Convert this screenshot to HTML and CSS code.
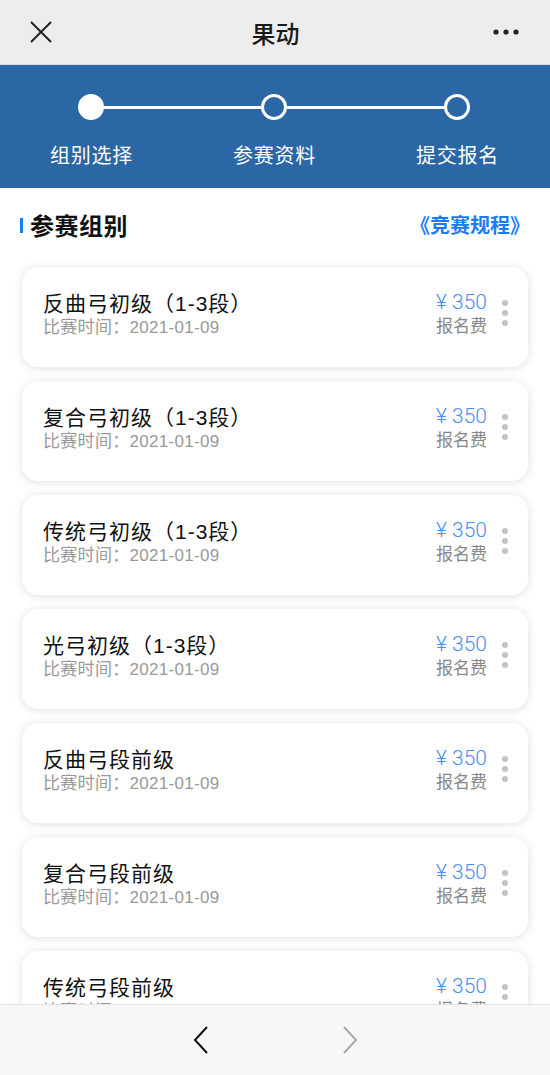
FILE: index.html
```html
<!DOCTYPE html>
<html lang="zh">
<head>
<meta charset="utf-8">
<title>果动</title>
<link rel="stylesheet" href="styles.css">
</head>
<body>
<div class="page">
  <header class="topbar">
    <svg class="close" width="24" height="24" viewBox="0 0 24 24"><path d="M2 2L22 22M22 2L2 22" stroke="#222" stroke-width="2" fill="none"/></svg>
    <div class="title">果动</div>
    <svg class="more" width="28" height="8" viewBox="0 0 28 8"><circle cx="4" cy="4" r="2.6" fill="#222"/><circle cx="14" cy="4" r="2.6" fill="#222"/><circle cx="24" cy="4" r="2.6" fill="#222"/></svg>
  </header>

  <section class="steps">
    <div class="track">
      <span class="dot filled"></span>
      <span class="line"></span>
      <span class="dot"></span>
      <span class="line"></span>
      <span class="dot"></span>
    </div>
    <div class="labels">
      <span>组别选择</span>
      <span>参赛资料</span>
      <span>提交报名</span>
    </div>
  </section>

  <div class="section-head">
    <h2><span class="bar"></span>参赛组别</h2>
    <a class="rules">《竞赛规程》</a>
  </div>

  <div class="cards">
    <div class="card"><div class="info"><div class="name">反曲弓初级（1-3段）</div><div class="date">比赛时间：2021-01-09</div></div><div class="fee"><div class="price">¥ 350</div><div class="label">报名费</div></div><div class="kebab"><i></i><i></i><i></i></div></div>
    <div class="card"><div class="info"><div class="name">复合弓初级（1-3段）</div><div class="date">比赛时间：2021-01-09</div></div><div class="fee"><div class="price">¥ 350</div><div class="label">报名费</div></div><div class="kebab"><i></i><i></i><i></i></div></div>
    <div class="card"><div class="info"><div class="name">传统弓初级（1-3段）</div><div class="date">比赛时间：2021-01-09</div></div><div class="fee"><div class="price">¥ 350</div><div class="label">报名费</div></div><div class="kebab"><i></i><i></i><i></i></div></div>
    <div class="card"><div class="info"><div class="name">光弓初级（1-3段）</div><div class="date">比赛时间：2021-01-09</div></div><div class="fee"><div class="price">¥ 350</div><div class="label">报名费</div></div><div class="kebab"><i></i><i></i><i></i></div></div>
    <div class="card"><div class="info"><div class="name">反曲弓段前级</div><div class="date">比赛时间：2021-01-09</div></div><div class="fee"><div class="price">¥ 350</div><div class="label">报名费</div></div><div class="kebab"><i></i><i></i><i></i></div></div>
    <div class="card"><div class="info"><div class="name">复合弓段前级</div><div class="date">比赛时间：2021-01-09</div></div><div class="fee"><div class="price">¥ 350</div><div class="label">报名费</div></div><div class="kebab"><i></i><i></i><i></i></div></div>
    <div class="card"><div class="info"><div class="name">传统弓段前级</div><div class="date">比赛时间：2021-01-09</div></div><div class="fee"><div class="price">¥ 350</div><div class="label">报名费</div></div><div class="kebab"><i></i><i></i><i></i></div></div>
  </div>

  <nav class="bottombar">
    <svg width="16" height="28" viewBox="0 0 16 28"><path d="M14 1L2 14L14 27" stroke="#111" stroke-width="2" fill="none"/></svg>
    <svg width="16" height="28" viewBox="0 0 16 28"><path d="M2 1L14 14L2 27" stroke="#aaa" stroke-width="2" fill="none"/></svg>
  </nav>
</div>
</body>
</html>
```

FILE: styles.css
```css
* { box-sizing: border-box; }
html, body { margin: 0; padding: 0; }
body {
  font-family: "Noto Sans CJK SC", "Noto Sans", sans-serif;
  background: #fff;
  width: 550px;
  height: 1075px;
  overflow: hidden;
}
.page {
  position: relative;
  width: 550px;
  height: 1075px;
  overflow: hidden;
}
.topbar {
  height: 65px;
  background: #ededed;
  display: flex;
  align-items: center;
  justify-content: space-between;
  padding: 0 30px 0 29px;
  border-bottom: 1px solid #d9dde3;
}
.topbar .title {
  font-size: 24px;
  color: #1a1a1a;
  font-weight: 500;
  margin-left: 6px;
}
.steps {
  height: 123px;
  background: #2c67a5;
  padding-top: 29px;
}
.track {
  display: flex;
  align-items: center;
  padding: 0 80px 0 78px;
}
.dot {
  width: 26px;
  height: 26px;
  border-radius: 50%;
  border: 3px solid #fff;
  flex: none;
}
.dot.filled { background: #fff; }
.line {
  flex: 1;
  height: 3px;
  background: #fff;
}
.labels {
  display: grid;
  grid-template-columns: repeat(3, 183px);
  margin-top: 21px;
  color: #fff;
  font-size: 20px;
  letter-spacing: 0.8px;
  line-height: 28px;
  text-align: center;
}
.section-head {
  display: flex;
  align-items: center;
  justify-content: space-between;
  padding: 0 20px 0 20px;
  height: 72px;
}
.section-head h2 {
  margin: 0;
  font-size: 24px;
  font-weight: 700;
  color: #111;
  display: flex;
  align-items: center;
  letter-spacing: 0.5px;
}
.section-head .bar {
  width: 3px;
  height: 15px;
  background: #1a7cf5;
  margin-right: 7px;
  margin-top: 3px;
}
.rules {
  color: #1a7cf5;
  font-size: 20px;
  font-weight: 700;
}
.cards {
  display: flex;
  flex-direction: column;
  gap: 14px;
  padding: 7px 22px 0 22px;
}
.card {
  height: 100px;
  background: #fff;
  border-radius: 16px;
  box-shadow: 0 1px 10px rgba(0, 0, 0, 0.13);
  display: flex;
  align-items: flex-start;
  padding: 22px 20px 0 21px;
}
.info {
  flex: 1;
  margin-top: 2px;
  font-family: "Liberation Sans", "Noto Sans CJK SC", sans-serif;
}
.name {
  font-size: 21px;
  letter-spacing: 1px;
  color: #111;
  line-height: 26px;
}
.date {
  font-size: 17px;
  letter-spacing: 0.3px;
  color: #999;
  line-height: 22px;
}
.fee {
  text-align: right;
  margin-right: 15px;
}
.price {
  font-family: Roboto, "Noto Sans CJK SC", sans-serif;
  font-weight: 300;
  font-size: 21px;
  color: #4a8ff2;
  line-height: 26px;
}
.label {
  font-family: "Liberation Sans", "Noto Sans CJK SC", sans-serif;
  font-size: 17px;
  color: #888;
  line-height: 22px;
  margin-top: 1px;
}
.kebab {
  display: flex;
  flex-direction: column;
  gap: 4px;
  padding-top: 11px;
}
.kebab i {
  display: block;
  width: 6px;
  height: 6px;
  border-radius: 50%;
  background: #bfc2c8;
}
.bottombar {
  position: absolute;
  left: 0;
  right: 0;
  bottom: 0;
  height: 71px;
  background: #f7f7f7;
  border-top: 1px solid #e3e3e3;
  display: flex;
  align-items: center;
  justify-content: center;
  gap: 133px;
  padding-bottom: 1px;
}
```
